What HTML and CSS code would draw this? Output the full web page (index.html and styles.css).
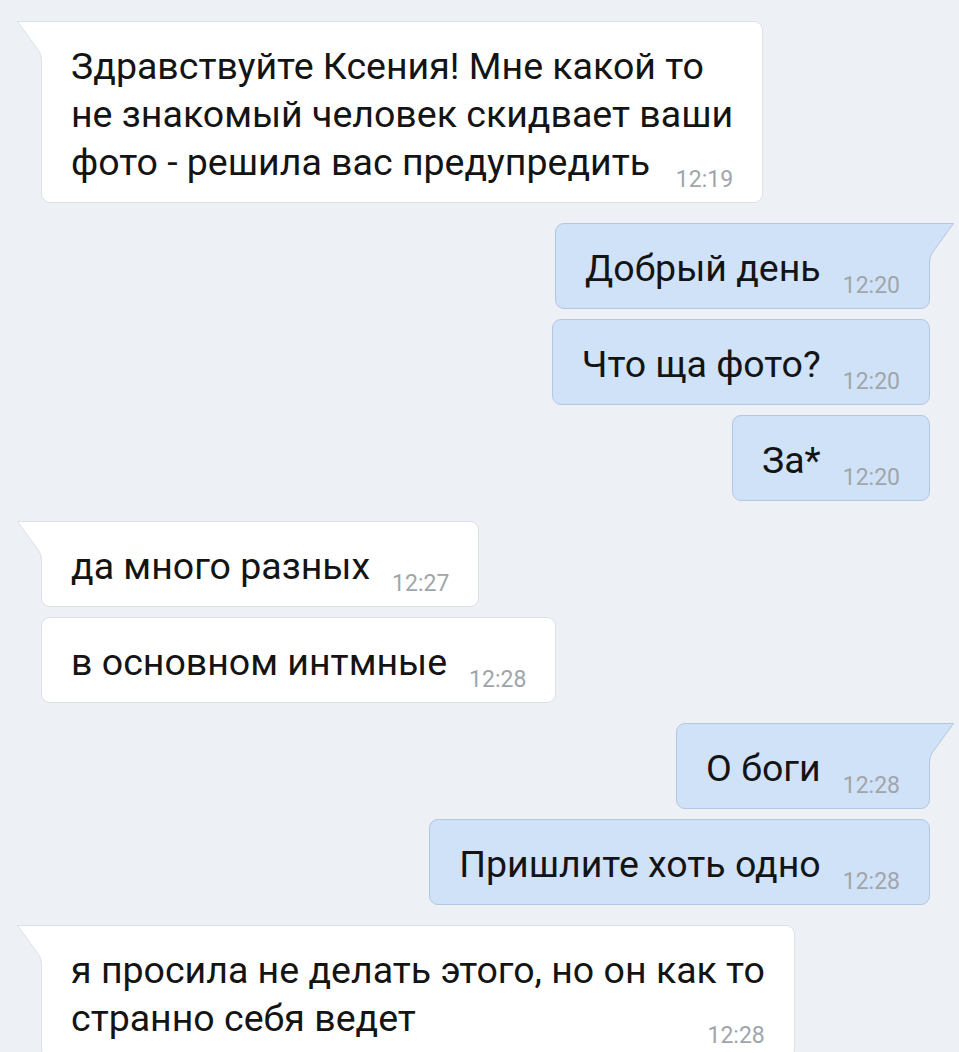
FILE: index.html
```html
<!DOCTYPE html>
<html lang="ru">
<head>
<meta charset="utf-8">
<title>Чат</title>
<link rel="stylesheet" href="styles.css">
</head>
<body>
<main class="chat">
  <section class="group in">
    <div class="bubble tailed">
      <svg class="tail" width="28" height="48" viewBox="0 0 28 48"><path class="tail-fill" d="M0.5,0.5 L22,30 Q24.5,34 24.5,40 V48 H28 V0 Z"/><path class="tail-stroke" d="M28,0.5 H0.5 L22,30 Q24.5,34 24.5,40 V48"/></svg>
      <span class="text">Здравствуйте Ксения! Мне какой то<br>не знакомый человек скидвает ваши<br>фото - решила вас предупредить</span><span class="time">12:19</span>
    </div>
  </section>

  <section class="group out">
    <div class="bubble tailed">
      <svg class="tail" width="28" height="48" viewBox="0 0 28 48"><path class="tail-fill" d="M0.5,0.5 L22,30 Q24.5,34 24.5,40 V48 H28 V0 Z"/><path class="tail-stroke" d="M28,0.5 H0.5 L22,30 Q24.5,34 24.5,40 V48"/></svg>
      <span class="text">Добрый день</span><span class="time">12:20</span>
    </div>
    <div class="bubble">
      <span class="text">Что ща фото?</span><span class="time">12:20</span>
    </div>
    <div class="bubble">
      <span class="text">За*</span><span class="time">12:20</span>
    </div>
  </section>

  <section class="group in">
    <div class="bubble tailed">
      <svg class="tail" width="28" height="48" viewBox="0 0 28 48"><path class="tail-fill" d="M0.5,0.5 L22,30 Q24.5,34 24.5,40 V48 H28 V0 Z"/><path class="tail-stroke" d="M28,0.5 H0.5 L22,30 Q24.5,34 24.5,40 V48"/></svg>
      <span class="text">да много разных</span><span class="time">12:27</span>
    </div>
    <div class="bubble">
      <span class="text">в основном интмные</span><span class="time">12:28</span>
    </div>
  </section>

  <section class="group out">
    <div class="bubble tailed">
      <svg class="tail" width="28" height="48" viewBox="0 0 28 48"><path class="tail-fill" d="M0.5,0.5 L22,30 Q24.5,34 24.5,40 V48 H28 V0 Z"/><path class="tail-stroke" d="M28,0.5 H0.5 L22,30 Q24.5,34 24.5,40 V48"/></svg>
      <span class="text">О боги</span><span class="time">12:28</span>
    </div>
    <div class="bubble">
      <span class="text">Пришлите хоть одно</span><span class="time">12:28</span>
    </div>
  </section>

  <section class="group in">
    <div class="bubble tailed">
      <svg class="tail" width="28" height="48" viewBox="0 0 28 48"><path class="tail-fill" d="M0.5,0.5 L22,30 Q24.5,34 24.5,40 V48 H28 V0 Z"/><path class="tail-stroke" d="M28,0.5 H0.5 L22,30 Q24.5,34 24.5,40 V48"/></svg>
      <span class="text">я просила не делать этого, но он как то<br>странно себя ведет</span><span class="time">12:28</span>
    </div>
  </section>
</main>
</body>
</html>
```

FILE: styles.css
```css
html, body {
  margin: 0;
  padding: 0;
  background: #edf0f4;
}

body {
  font-family: Roboto, "Noto Sans", "Liberation Sans", sans-serif;
  color: #111;
  -webkit-font-smoothing: antialiased;
}

.chat {
  display: flex;
  flex-direction: column;
  gap: 20px;
  padding: 21px 29px 40px 41px;
}

.group {
  display: flex;
  flex-direction: column;
  gap: 10px;
}

.group.in {
  align-items: flex-start;
}

.group.out {
  align-items: flex-end;
}

.bubble {
  --fill: #ffffff;
  --line: #dde1e7;
  position: relative;
  display: block;
  background: var(--fill);
  border: 1px solid var(--line);
  border-radius: 9px;
  padding: 20px 29px 16px 29px;
  font-size: 37.5px;
  line-height: 48px;
  white-space: nowrap;
  letter-spacing: 0;
}

.out .bubble {
  --fill: #d0e2f8;
  --line: #b4c7e0;
}

.in .bubble.tailed {
  border-top-left-radius: 0;
}

.out .bubble.tailed {
  border-top-right-radius: 0;
}

.tail {
  position: absolute;
  top: -1px;
  display: block;
  overflow: visible;
}

.in .tail {
  left: -25px;
}

.out .tail {
  right: -25px;
  transform: scaleX(-1);
}

.tail-fill {
  fill: var(--fill);
}

.tail-stroke {
  fill: none;
  stroke: var(--line);
  stroke-width: 1;
}

.text {
  color: #141414;
}

.time {
  float: right;
  margin: 30px 0 -30px 22px;
  font-size: 23px;
  line-height: 23px;
  color: #a0a5ab;
}
```
